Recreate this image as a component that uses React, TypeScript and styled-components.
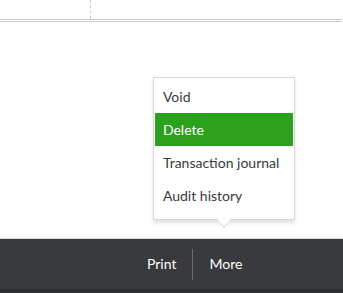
import React from 'react';
import styled, { createGlobalStyle } from 'styled-components';

const GlobalStyle = createGlobalStyle`
  html, body {
    margin: 0;
    padding: 0;
    background: #fff;
    font-family: Lato, "Open Sans", sans-serif;
  }
`;

const Page = styled.div`
  width: 343px;
  height: 293px;
  display: flex;
  flex-direction: column;
  overflow: hidden;
`;

const TableHead = styled.div`
  display: flex;
  height: 19px;
  border-bottom: 3px double #c9cbcf;
  margin-right: 1px;
`;

const HeadCell = styled.div<{ $width?: number }>`
  width: ${(p) => (p.$width ? p.$width + 'px' : 'auto')};
  flex: ${(p) => (p.$width ? 'none' : 1)};
  border-right: ${(p) => (p.$width ? '1px dashed #c9cbcf' : 'none')};
`;

const Body = styled.div`
  flex: 1;
  border-bottom: 1px solid #d4d7dc;
`;

const Footer = styled.div`
  height: 50px;
  background: #393a3d;
  display: flex;
  align-items: center;
  padding-left: 131px;
`;

const FooterButton = styled.div`
  position: relative;
  color: #fff;
  font-size: 14px;
  padding: 0 16px;
  line-height: 30px;
`;

const Divider = styled.div`
  width: 1px;
  height: 31px;
  background: #6b6c72;
`;

const Strip = styled.div`
  height: 4px;
  background: #2e2f31;
`;

const Menu = styled.ul`
  position: absolute;
  bottom: calc(100% + 29px);
  left: 50%;
  transform: translateX(calc(-50% - 2px));
  width: 138px;
  margin: 0;
  padding: 2px 1px 7px;
  list-style: none;
  background: #fff;
  border: 1px solid #d4d7dc;
  box-shadow: 0 3px 4px rgba(0, 0, 0, 0.12);

  &::after {
    content: '';
    position: absolute;
    left: 50%;
    bottom: -8px;
    width: 12px;
    height: 12px;
    background: #fff;
    border-right: 1px solid #d4d7dc;
    border-bottom: 1px solid #d4d7dc;
    transform: translateX(-50%) rotate(45deg) scale(0.75, 0.75);
  }
`;

const MenuItem = styled.li<{ $active?: boolean }>`
  height: 33px;
  line-height: 33px;
  padding: 0 8px;
  font-size: 14px;
  white-space: nowrap;
  color: ${(p) => (p.$active ? '#fff' : '#393a3d')};
  background: ${(p) => (p.$active ? '#2ca01c' : 'transparent')};
`;

const items = ['Void', 'Delete', 'Transaction journal', 'Audit history'];

const App = () => {
  return (
    <>
      <GlobalStyle />
      <Page>
        <TableHead>
          <HeadCell $width={90} />
          <HeadCell />
        </TableHead>
        <Body />
        <Footer>
          <FooterButton>Print</FooterButton>
          <Divider />
          <FooterButton>
            More
            <Menu>
              {items.map((item) => (
                <MenuItem key={item} $active={item === 'Delete'}>
                  {item}
                </MenuItem>
              ))}
            </Menu>
          </FooterButton>
        </Footer>
        <Strip />
      </Page>
    </>
  );
};

export default App;
